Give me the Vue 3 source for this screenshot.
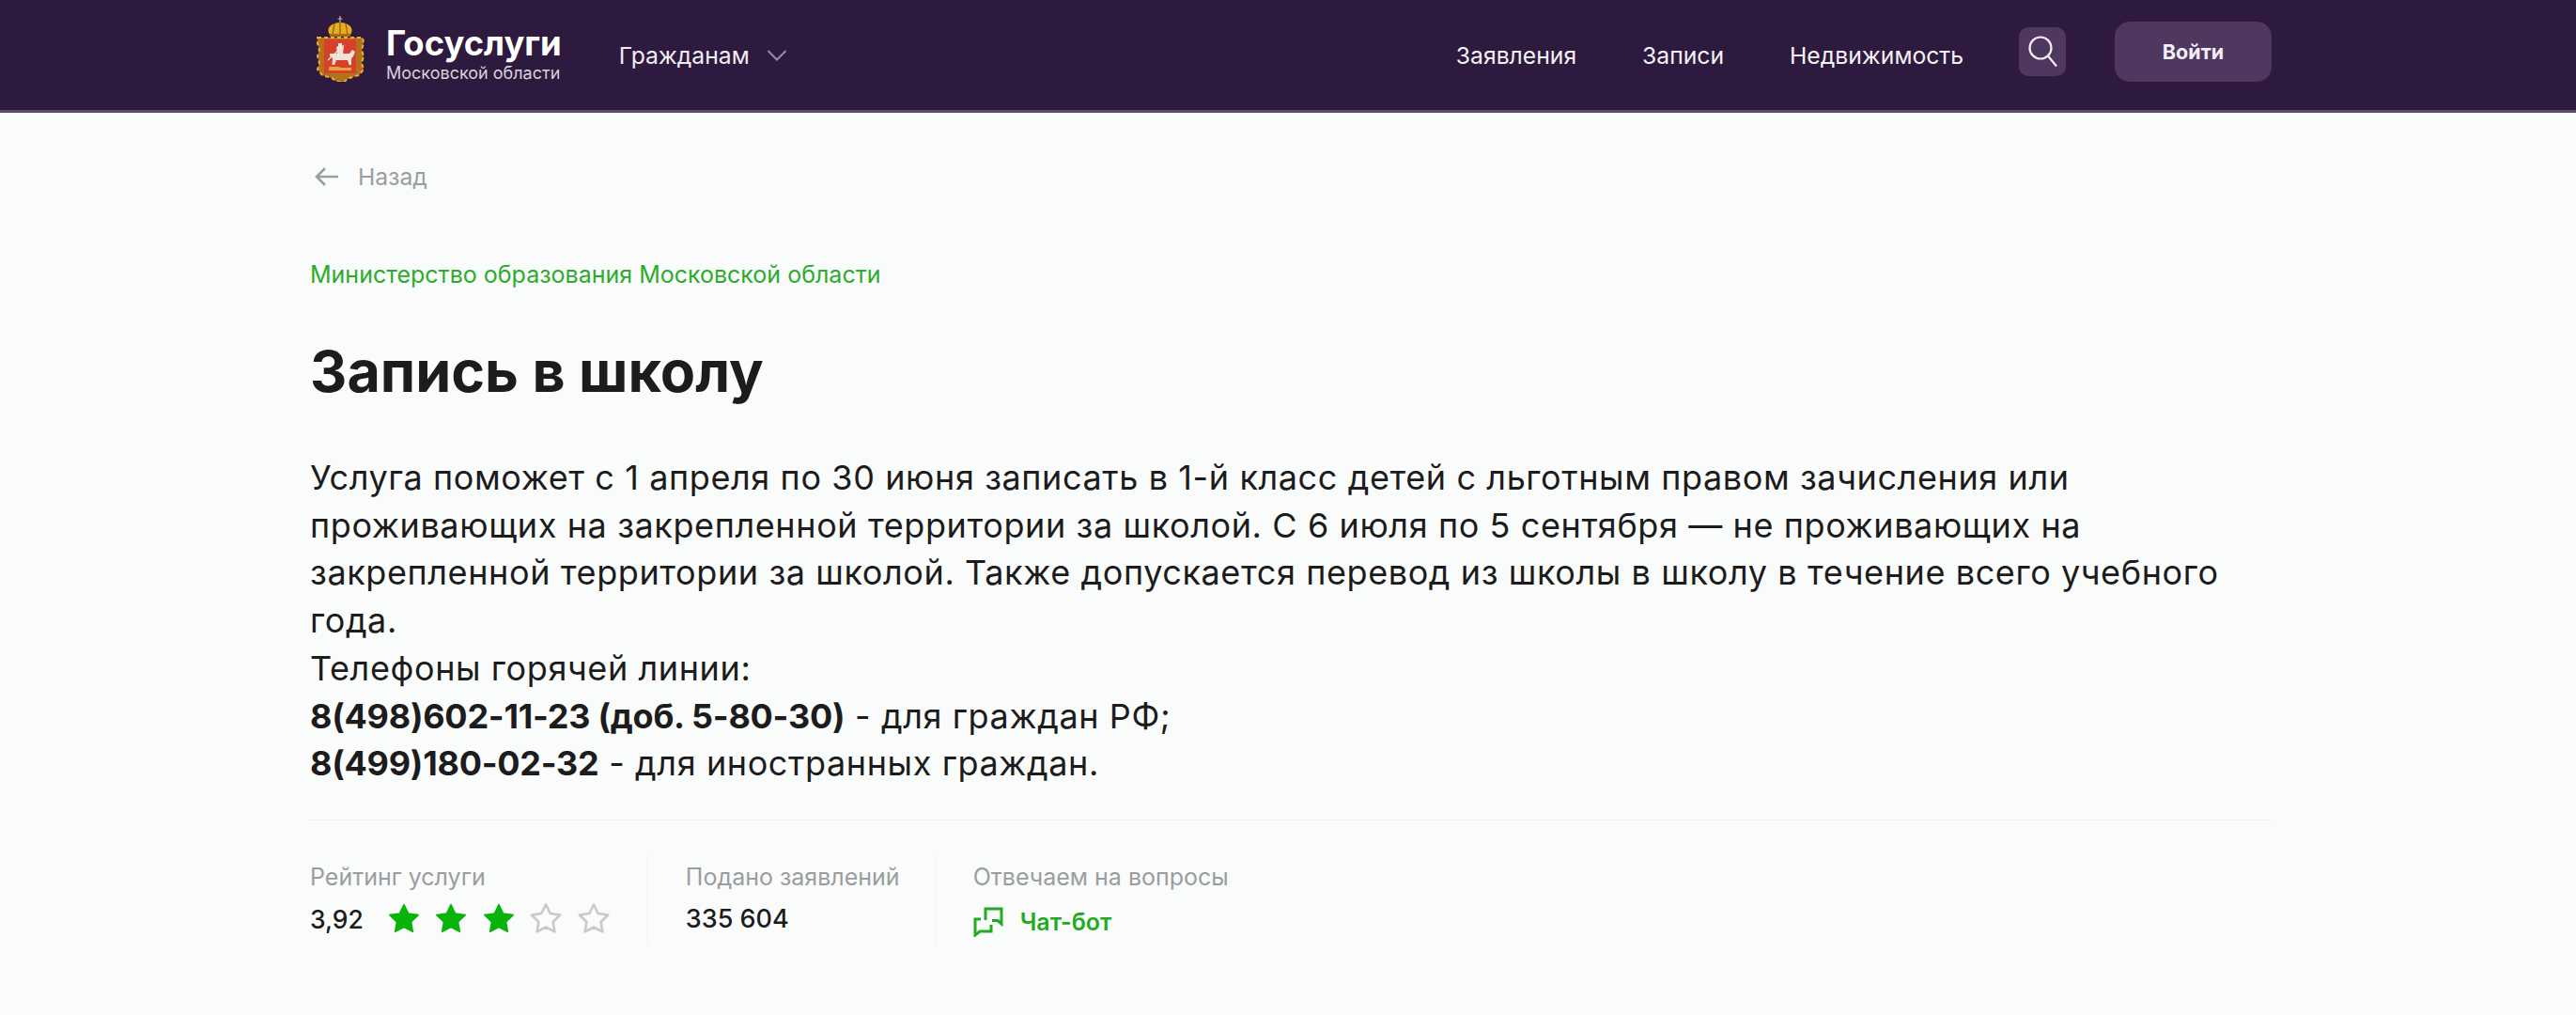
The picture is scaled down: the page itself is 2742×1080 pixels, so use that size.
<script setup>
const navItems = ['Заявления', 'Записи', 'Недвижимость']
const stars = [true, true, true, false, false]
const starPath = 'M17 1.5l4.7 9.5 10.5 1.6-7.6 7.4 1.8 10.4-9.4-4.9-9.4 4.9L9.4 20l-7.6-7.4L12.3 11z'
</script>

<template>
  <div class="page">
    <header class="header">
      <div class="bar">
        <div class="brand">
          <svg class="crest" viewBox="0 0 54 70" width="54" height="70">
            <path d="M27 0v8M24.5 3h5" stroke="#c9b58a" stroke-width="1.2" fill="none" />
            <path d="M16 20c-5-8 3-13 11-13s16 5 11 13z" fill="#e3ad1e" />
            <path d="M27 7v13M21 8l-2 12M33 8l2 12" stroke="#8a5d12" stroke-width="1.2" fill="none" />
            <rect x="16" y="19" width="22" height="3" fill="#a86c14" />
            <path d="M3 23h48l1 6-2 7 2 7-2 7 2 7-5 6-10 3-6 4H24l-6-4-10-3-5-6 2-7-2-7 2-7-2-7z" fill="#b5701a" />
            <path d="M3 23h48l1 6-2 7 2 7-2 7 2 7-5 6-10 3-6 4H24l-6-4-10-3-5-6 2-7-2-7 2-7-2-7z" fill="none" stroke="#eab13a" stroke-width="2" stroke-dasharray="4 3" />
            <rect x="10" y="25" width="34" height="36" fill="#d9402b" />
            <path d="M25 29h4v3l2 1-1 7h-6l-1-7 2-1z" fill="#eee3d6" />
            <path d="M16 40h21l3-4 3 2-2 5-2 2v7h-2.5l-1.5-5H23l-2 5h-2.5l.5-7-3-2z" fill="#eee3d6" />
            <path d="M14 47L31 31" stroke="#eee3d6" stroke-width="1.2" fill="none" />
            <path d="M15 54h10l3 1h11v3H15z" fill="#e3a53c" />
          </svg>
          <div class="brand-text">
            <div class="brand-title">Госуслуги</div>
            <div class="brand-sub">Московской области</div>
          </div>
        </div>
        <button class="menu">
          <span>Гражданам</span>
          <svg viewBox="0 0 22 14" width="22" height="14"><path d="M1.5 2l9.5 9.5L20.5 2" fill="none" stroke="#9a8aa6" stroke-width="2" /></svg>
        </button>
        <nav class="nav">
          <a v-for="item in navItems" :key="item" class="nav-link">{{ item }}</a>
        </nav>
        <div class="search">
          <svg viewBox="0 0 32 34" width="32" height="34"><circle cx="14" cy="13" r="11.5" fill="none" stroke="#f2eef5" stroke-width="2.2" /><path d="M22 21.5l9 11" stroke="#f2eef5" stroke-width="2.2" fill="none" /></svg>
        </div>
        <button class="login">Войти</button>
      </div>
    </header>

    <main class="main">
      <a class="back">
        <svg viewBox="0 0 26 22" width="26" height="22"><path d="M11 2L2 11l9 9M2 11h23" fill="none" stroke="#9b9ea0" stroke-width="2.6" /></svg>
        <span>Назад</span>
      </a>
      <div class="ministry">Министерство образования Московской области</div>
      <h1 class="title">Запись в школу</h1>
      <div class="desc">
        <p>Услуга поможет с 1 апреля по 30 июня записать в 1-й класс детей с льготным правом зачисления или проживающих на закрепленной территории за школой. С 6 июля по 5 сентября — не проживающих на закрепленной территории за школой. Также допускается перевод из школы в школу в течение всего учебного года.</p>
        <p>Телефоны горячей линии:</p>
        <p><b>8(498)602-11-23 (доб. 5-80-30)</b> - для граждан РФ;</p>
        <p><b>8(499)180-02-32</b> - для иностранных граждан.</p>
      </div>
      <section class="stats">
        <div class="stat first">
          <div class="label">Рейтинг услуги</div>
          <div class="value">
            <span class="rate">3,92</span>
            <div class="stars">
              <svg v-for="(on, i) in stars" :key="i" viewBox="0 0 34 34" width="34" height="34">
                <path :d="starPath" :fill="on ? '#0ab30a' : 'none'" :stroke="on ? '#0ab30a' : '#c8caca'" :stroke-width="on ? 1.5 : 2.6" stroke-linejoin="round" />
              </svg>
            </div>
          </div>
        </div>
        <div class="stat second">
          <div class="label">Подано заявлений</div>
          <div class="value"><span>335 604</span></div>
        </div>
        <div class="stat">
          <div class="label">Отвечаем на вопросы</div>
          <div class="value chat">
            <svg viewBox="0 0 32 32" width="32" height="32"><path d="M13 14V2h17v16l-4-3.5h-6M8 13H2v17l5-4h12v-7" fill="none" stroke="#22ab22" stroke-width="3" /></svg>
            <span>Чат-бот</span>
          </div>
        </div>
      </section>
    </main>
  </div>
</template>

<style>
html, body { margin: 0; background: #fafbfb; }
</style>

<style scoped>
.page { min-height: 1080px; background: #fafbfb; font-family: Inter, "Noto Sans", sans-serif; color: #1c1c1c; }
.header { height: 117px; background: #2e1a3e; border-bottom: 3px solid #5d4a69; display: flex; justify-content: center; padding-left: 6px; }
.bar { width: 2088px; display: flex; align-items: center; }
.brand { display: flex; align-items: center; gap: 22px; margin-left: 5px; }
.crest { display: block; margin-bottom: 13px; }
.brand-text { display: flex; flex-direction: column; gap: 3px; }
.brand-title { font-size: 36.4px; font-weight: 700; line-height: 36px; color: #fff; }
.brand-sub { font-size: 18px; line-height: 22px; color: #d8d2dc; }
.menu { display: flex; align-items: center; gap: 18px; margin-left: 61px; padding: 0; background: none; border: 0; font: inherit; font-size: 24.7px; color: #f1edf4; }
.nav { display: flex; gap: 70px; margin-left: auto; }
.nav-link { font-size: 24.7px; color: #f5f2f7; }
.search { width: 50px; height: 52px; margin-left: 59px; background: #4f3760; border-radius: 10px; display: flex; align-items: center; justify-content: center; margin-top: -8px; }
.login { width: 167px; height: 64px; margin-left: 52px; background: #4f3760; border: 0; border-radius: 16px; font: inherit; font-size: 21.5px; font-weight: 700; color: #f3eff6; margin-top: -8px; }
.main { width: 2088px; margin: 0 auto; padding-left: 6px; }
.back { display: flex; align-items: center; gap: 20px; margin: 53px 0 0 5px; height: 30px; font-size: 24.7px; color: #9b9ea0; }
.ministry { margin-top: 72px; font-size: 25px; line-height: 34px; color: #2cab2c; }
.title { margin: 46px 0 0; font-size: 61px; line-height: 80px; font-weight: 700; color: #1c1c1c; }
.desc { margin-top: 48px; font-size: 36px; line-height: 50.7px; letter-spacing: 0.6px; }
.desc b { letter-spacing: -0.25px; }
.desc p { margin: 0; }
.stats { margin-top: 34px; padding-top: 38px; border-top: 1px solid #eef0f0; display: flex; }
.stat { box-sizing: border-box; padding: 5px 40px 0; border-right: 1px solid #f0f1f1; height: 96px; }
.stat:last-child { border-right: 0; }
.stat.first { padding-left: 0; }
.stat.second { padding-right: 37px; }
.label { font-size: 25px; line-height: 34px; color: #9a9d9f; }
.value { display: flex; align-items: center; gap: 26px; height: 50px; margin-top: 3px; font-size: 27px; font-weight: 500; color: #1c1c1c; }
.rate { font-size: 26.5px; }
.stars { display: flex; gap: 16.5px; }
.chat { gap: 18px; margin-top: 6px; color: #22ab22; font-size: 25px; font-weight: 600; }
</style>
